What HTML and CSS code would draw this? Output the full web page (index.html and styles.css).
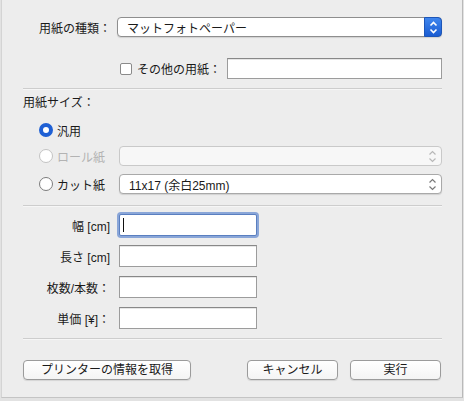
FILE: index.html
```html
<!DOCTYPE html>
<html lang="ja">
<head>
<meta charset="utf-8">
<link rel="stylesheet" href="styles.css">
</head>
<body>
<div class="window">
  <div class="row row-type">
    <span class="label">用紙の種類：</span>
    <div class="popup primary">
      <span class="popup-text">マットフォトペーパー</span>
      <span class="stepper blue">
        <svg width="9" height="13" viewBox="0 0 9 13"><path d="M1.5 4.5 L4.5 1.5 L7.5 4.5 M1.5 8.5 L4.5 11.5 L7.5 8.5" fill="none" stroke="#fff" stroke-width="1.6"/></svg>
      </span>
    </div>
  </div>

  <div class="row row-other">
    <span class="checkbox"></span>
    <span class="other-label">その他の用紙：</span>
    <div class="textfield other-field"></div>
  </div>

  <div class="sep sep1"></div>

  <div class="section-title">用紙サイズ：</div>

  <div class="row radio-row r1">
    <span class="radio checked"></span>
    <span class="radio-text">汎用</span>
  </div>

  <div class="row radio-row r2">
    <span class="radio disabled"></span>
    <span class="radio-text disabled-text">ロール紙</span>
    <div class="popup plain disabled-popup">
      <span class="popup-text"></span>
      <span class="stepper gray">
        <svg width="9" height="13" viewBox="0 0 9 13"><path d="M1.5 4.5 L4.5 1.5 L7.5 4.5 M1.5 8.5 L4.5 11.5 L7.5 8.5" fill="none" stroke="#b8b8b8" stroke-width="1.2"/></svg>
      </span>
    </div>
  </div>

  <div class="row radio-row r3">
    <span class="radio"></span>
    <span class="radio-text">カット紙</span>
    <div class="popup plain">
      <span class="popup-text">11x17 (余白25mm)</span>
      <span class="stepper gray">
        <svg width="9" height="13" viewBox="0 0 9 13"><path d="M1.5 4.5 L4.5 1.5 L7.5 4.5 M1.5 8.5 L4.5 11.5 L7.5 8.5" fill="none" stroke="#7a7a7a" stroke-width="1.2"/></svg>
      </span>
    </div>
  </div>

  <div class="sep sep2"></div>

  <div class="fields">
    <div class="row field-row">
      <span class="field-label">幅 [cm]</span>
      <div class="textfield small focused"><span class="caret"></span></div>
    </div>
    <div class="row field-row">
      <span class="field-label">長さ [cm]</span>
      <div class="textfield small"></div>
    </div>
    <div class="row field-row">
      <span class="field-label">枚数/本数：</span>
      <div class="textfield small"></div>
    </div>
    <div class="row field-row">
      <span class="field-label">単価 [¥]：</span>
      <div class="textfield small"></div>
    </div>
  </div>

  <div class="sep sep3"></div>

  <div class="row buttons">
    <button class="btn btn-info">プリンターの情報を取得</button>
    <span class="spacer"></span>
    <button class="btn btn-cancel">キャンセル</button>
    <button class="btn btn-run">実行</button>
  </div>
</div>
</body>
</html>
```

FILE: styles.css
```css
html, body {
  margin: 0;
  padding: 0;
}
body {
  width: 464px;
  height: 401px;
  background: #e2e2e2;
  overflow: hidden;
  font-family: "Liberation Sans", "Noto Sans CJK JP", sans-serif;
  font-size: 12px;
  color: #1a1a1a;
}
.window {
  box-sizing: border-box;
  width: 462px;
  height: 398px;
  margin-left: 1px;
  background: #ededed;
  border-left: 1px solid #d4d4d4;
  border-right: 1px solid #b9b9b9;
  border-bottom: 1px solid #c4c4c4;
  padding: 17px 20px 0 21px;
  display: flex;
  flex-direction: column;
}
.row {
  display: flex;
  align-items: center;
}
.label {
  width: 88px;
  text-align: right;
  margin-right: 6px;
}
.row-type {
  height: 20px;
}
.popup {
  box-sizing: border-box;
  flex: 1;
  height: 20px;
  display: flex;
  align-items: center;
  background: #fff;
  border: 1px solid #a9a9a9;
  border-radius: 4px;
  box-shadow: 0 1px 1px rgba(0,0,0,0.12);
  position: relative;
}
.popup.primary {
  border-color: #8e8e8e;
}
.popup-text {
  flex: 1;
  padding-left: 9px;
  white-space: nowrap;
}
.stepper {
  width: 17px;
  height: 100%;
  display: flex;
  align-items: center;
  justify-content: center;
}
.stepper.blue {
  box-sizing: border-box;
  height: 20px;
  width: 18px;
  margin: -1px -1px -1px 0;
  border-radius: 0 4px 4px 0;
  background: linear-gradient(#3f86ee, #1a5cd2);
  border: 1px solid #1d56b8;
}
.disabled-popup {
  background: #f7f7f7;
  border-color: #c9c9c9;
  box-shadow: none;
}
.row-other {
  margin-top: 21px;
  height: 21px;
  padding-left: 97px;
}
.checkbox {
  box-sizing: border-box;
  width: 12px;
  height: 12px;
  border: 1px solid #8a8a8a;
  border-radius: 2px;
  background: #fff;
  margin-right: 5px;
}
.other-label {
  margin-right: 6px;
}
.textfield {
  box-sizing: border-box;
  background: #fff;
  border: 1px solid #9c9c9c;
  border-top-color: #888;
  box-shadow: inset 0 1px 0 #e6e6e6;
}
.other-field {
  flex: 1;
  height: 21px;
}
.sep {
  height: 1px;
  background: #cdcdcd;
  border-bottom: 1px solid #f6f6f6;
}
.sep1 { margin-top: 9px; }
.section-title {
  margin-top: 5px;
  height: 16px;
  line-height: 16px;
}
.radio-row {
  height: 20px;
  padding-left: 16px;
}
.r1 { margin-top: 9px; }
.r2 { margin-top: 6px; }
.r3 { margin-top: 8px; }
.radio {
  box-sizing: border-box;
  width: 14px;
  height: 14px;
  border-radius: 50%;
  border: 1px solid #7c7c7c;
  background: #fff;
  margin-right: 4px;
  flex: none;
}
.radio.checked {
  border: 4px solid #1f60d4;
  background: #fff;
}
.radio.disabled {
  border-color: #c3c3c3;
}
.radio-text {
  width: 62px;
}
.disabled-text {
  color: #b3b3b3;
}
.sep2 { margin-top: 11px; }
.fields {
  margin-top: 7px;
  display: flex;
  flex-direction: column;
  gap: 9px;
}
.field-row {
  height: 22px;
}
.field-label {
  width: 87px;
  text-align: right;
  margin-right: 9px;
}
.textfield.small {
  width: 138px;
  height: 22px;
}
.textfield.focused {
  border: 1px solid #5a7fc0;
  box-shadow: 0 0 0 2px #8aa6d8;
  border-radius: 2px;
  display: flex;
  align-items: center;
  padding-left: 3px;
}
.caret {
  width: 1px;
  height: 14px;
  background: #111;
}
.sep3 { margin-top: 9px; }
.buttons {
  margin-top: 20px;
  height: 20px;
}
.spacer { flex: 1; }
.btn {
  box-sizing: border-box;
  height: 20px;
  padding: 0;
  font: inherit;
  color: #1a1a1a;
  background: linear-gradient(#ffffff, #f4f4f4);
  border: 1px solid #9b9b9b;
  border-radius: 4px;
  box-shadow: 0 1px 1px rgba(0,0,0,0.1);
  line-height: 18px;
}
.btn-info { width: 168px; }
.btn-cancel { width: 91px; margin-right: 12px; }
.btn-run { width: 91px; margin-right: 1px; }
```
